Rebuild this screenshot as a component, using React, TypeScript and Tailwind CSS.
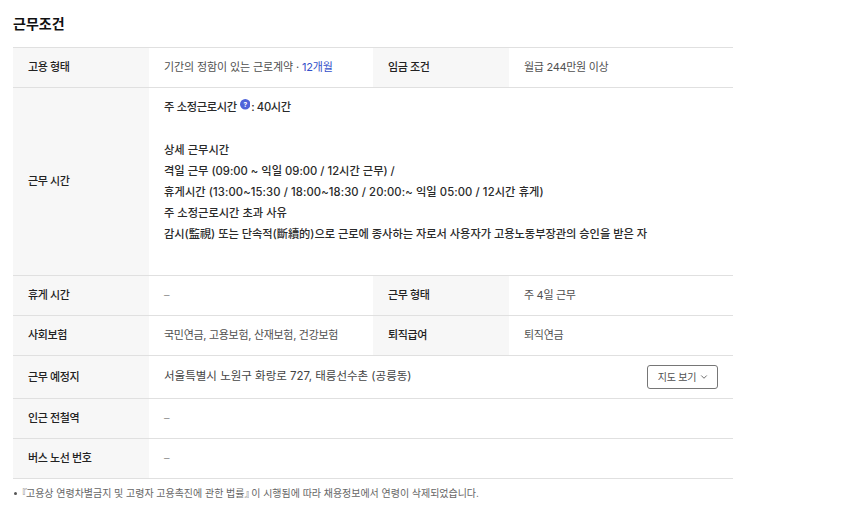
import { ChevronDown } from "lucide-react";
import type { ReactNode } from "react";

const font = "font-['Inter','Noto_Sans_CJK_KR',sans-serif]";

function Label({ children }: { children: ReactNode }) {
  return (
    <div className="flex w-[136px] shrink-0 items-center bg-[#f7f7f7] pl-[15px] text-[11px] font-medium tracking-[-0.4px] text-[#222222]">
      {children}
    </div>
  );
}

function Value({ children, dash }: { children: ReactNode; dash?: boolean }) {
  return (
    <div className={"flex w-[224px] shrink-0 items-center pl-[15px] text-[11px] tracking-[-0.3px] " + (dash ? "text-[#999999]" : "text-[#505050]")}>
      {children}
    </div>
  );
}

function Row({ h, children }: { h: string; children: ReactNode }) {
  return <div className={"flex border-b border-[#e0e0e0] " + h}>{children}</div>;
}

function HelpDot() {
  return (
    <svg viewBox="0 0 12 12" className="mb-[6px] ml-[3px] mr-[1px] h-[10.5px] w-[10.5px]">
      <circle cx="6" cy="6" r="6" fill="#4f63d9" />
      <text x="6" y="8.6" textAnchor="middle" fontSize="7.5" fontWeight="700" fill="#ffffff">?</text>
    </svg>
  );
}

export default function App() {
  return (
    <div className={"h-[526px] w-[861px] bg-white pl-[13px] pt-[13px] " + font}>
      <h2 className="h-[34px] text-[14px] font-bold leading-[21px] text-[#111111]">근무조건</h2>
      <div className="w-[720px] border-t border-[#e0e0e0]">
        <Row h="h-[40px]">
          <Label>고용 형태</Label>
          <Value>
            <span className="tracking-[-0.12px]">기간의 정함이 있는 근로계약 · <span className="text-[#3450c9]">12개월</span></span>
          </Value>
          <Label>임금 조건</Label>
          <Value>월급 244만원 이상</Value>
        </Row>
        <Row h="h-[188px]">
          <Label>근무 시간</Label>
          <div className="pl-[15px] pt-[9px] text-[11.25px] font-medium leading-[21.1px] text-[#2a2a2a]">
            <div className="flex items-center tracking-[-0.35px]">
              주 소정근로시간<HelpDot />:&nbsp;40시간
            </div>
            <div className="mt-[21.5px]">상세 근무시간</div>
            <div>격일 근무 (09:00 ~ 익일 09:00 / 12시간 근무) /</div>
            <div className="tracking-[0.09px]">휴게시간 (13:00~15:30 / 18:00~18:30 / 20:00:~ 익일 05:00 / 12시간 휴게)</div>
            <div>주 소정근로시간 초과 사유</div>
            <div className="tracking-[-0.05px]">감시(監視) 또는 단속적(斷續的)으로 근로에 종사하는 자로서 사용자가 고용노동부장관의 승인을 받은 자</div>
          </div>
        </Row>
        <Row h="h-[40px]">
          <Label>휴게 시간</Label>
          <Value dash>–</Value>
          <Label>근무 형태</Label>
          <Value>주 4일 근무</Value>
        </Row>
        <Row h="h-[40px]">
          <Label>사회보험</Label>
          <Value>국민연금, 고용보험, 산재보험, 건강보험</Value>
          <Label>퇴직급여</Label>
          <Value>퇴직연금</Value>
        </Row>
        <Row h="h-[43px]">
          <Label>근무 예정지</Label>
          <div className="flex flex-1 items-center justify-between pl-[15px] pr-[15px] text-[11.5px] text-[#444444]">
            <span>서울특별시 노원구 화랑로 727, 태릉선수촌 (공릉동)</span>
            <button className="flex h-[24px] w-[71px] items-center justify-center gap-[3px] rounded-[3px] border border-[#767676] pl-[2px] text-[10px] tracking-[-0.2px] text-[#505050]">
              지도 보기
              <ChevronDown className="h-[10px] w-[10px]" strokeWidth={2} />
            </button>
          </div>
        </Row>
        <Row h="h-[40px]">
          <Label>인근 전철역</Label>
          <Value dash>–</Value>
        </Row>
        <Row h="h-[40px]">
          <Label>버스 노선 번호</Label>
          <Value dash>–</Value>
        </Row>
      </div>
      <div className="mt-[7px] flex items-center text-[10px] leading-[15px] tracking-[-0.03px] text-[#666666]">
        <span className="ml-[1px] mr-[3px] h-[3px] w-[3px] rounded-full bg-[#555555]" />
        <span>
          <span className="ml-[-3px] tracking-[-1px]">『</span>고용상 연령차별금지 및 고령자 고용촉진에 관한 법률<span className="tracking-[-6px]">』</span> 이 시행됨에 따라 채용정보에서 연령이 삭제되었습니다.
        </span>
      </div>
    </div>
  );
}
